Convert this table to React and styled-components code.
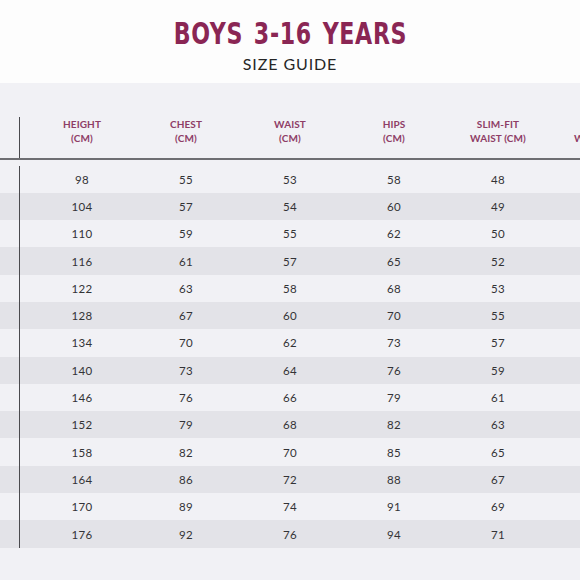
import React from 'react'
import styled, { createGlobalStyle } from 'styled-components'

const GlobalStyle = createGlobalStyle`
  html, body {
    margin: 0;
    padding: 0;
    background: #fdfdfd;
  }
  body {
    width: 580px;
    height: 580px;
    overflow: hidden;
    font-family: Lato, "Open Sans", sans-serif;
  }
`

const columns = ['HEIGHT|(CM)', 'CHEST|(CM)', 'WAIST|(CM)', 'HIPS|(CM)', 'SLIM-FIT|WAIST (CM)', 'PLUS-FIT|WAIST (CM)']

const rows = [
  [98, 55, 53, 58, 48, 50],
  [104, 57, 54, 60, 49, 51],
  [110, 59, 55, 62, 50, 52],
  [116, 61, 57, 65, 52, 54],
  [122, 63, 58, 68, 53, 55],
  [128, 67, 60, 70, 55, 57],
  [134, 70, 62, 73, 57, 59],
  [140, 73, 64, 76, 59, 61],
  [146, 76, 66, 79, 61, 63],
  [152, 79, 68, 82, 63, 65],
  [158, 82, 70, 85, 65, 67],
  [164, 86, 72, 88, 67, 69],
  [170, 89, 74, 91, 69, 71],
  [176, 92, 76, 94, 71, 73],
]

function App() {
  return (
    <Page>
      <GlobalStyle />
      <Heading>
        <Title>BOYS 3-16 YEARS</Title>
        <Subtitle>SIZE GUIDE</Subtitle>
      </Heading>
      <Panel>
        <HeadRow>
          <SizeCell />
          {columns.map((c) => (
            <HeadCell key={c}>
              {c.split('|').map((line) => (
                <span key={line}>{line}</span>
              ))}
            </HeadCell>
          ))}
        </HeadRow>
        {rows.map((r, i) => (
          <Row key={r[0]} $shaded={i % 2 === 1} $first={i === 0}>
            <SizeCell />
            {r.map((v, j) => (
              <Cell key={j}>{v}</Cell>
            ))}
          </Row>
        ))}
      </Panel>
    </Page>
  )
}

export default App

const Page = styled.div`
  width: 580px;
  height: 580px;
  display: flex;
  flex-direction: column;
  overflow: hidden;
`

const Heading = styled.header`
  height: 83px;
  display: flex;
  flex-direction: column;
  align-items: center;
  background: #fdfdfd;
`

const Title = styled.h1`
  margin: 17px 0 0;
  font-family: "DejaVu Sans Condensed", "DejaVu Sans", sans-serif;
  font-weight: 700;
  font-size: 30px;
  line-height: 34px;
  letter-spacing: 0.8px;
  word-spacing: 3px;
  color: #8a2654;
  transform: scaleX(0.82);
`

const Subtitle = styled.div`
  margin-top: 4px;
  font-family: Lato, sans-serif;
  font-size: 16px;
  line-height: 18px;
  letter-spacing: 0.9px;
  color: #262626;
`

const Panel = styled.main`
  flex: 1;
  background: #f1f1f5;
  padding-top: 34px;
`

const grid = `
  display: grid;
  grid-template-columns: 20px repeat(6, 104px);
  width: 644px;
`

const HeadRow = styled.div`
  ${grid}
  width: 580px;
  border-bottom: 2px solid #6e6e72;
`

const SizeCell = styled.div`
  border-right: 1.5px solid #4a4a4e;
  box-sizing: border-box;
`

const HeadCell = styled.div`
  padding: 0 0 13px 20px;
  display: flex;
  flex-direction: column;
  align-items: center;
  font-family: Lato, sans-serif;
  font-weight: 700;
  font-size: 10px;
  line-height: 14px;
  letter-spacing: 0.1px;
  color: #8e3d66;
  white-space: nowrap;
`

const Row = styled.div`
  ${grid}
  height: 27.3px;
  padding-top: ${(p) => (p.$first ? '5.5px' : '0')};
  background: ${(p) => (p.$shaded ? '#e3e3e8' : '#f1f1f5')};
`

const Cell = styled.div`
  padding-left: 20px;
  display: flex;
  align-items: center;
  justify-content: center;
  font-family: Lato, sans-serif;
  font-size: 11.5px;
  letter-spacing: 0.3px;
  color: #333336;
`
